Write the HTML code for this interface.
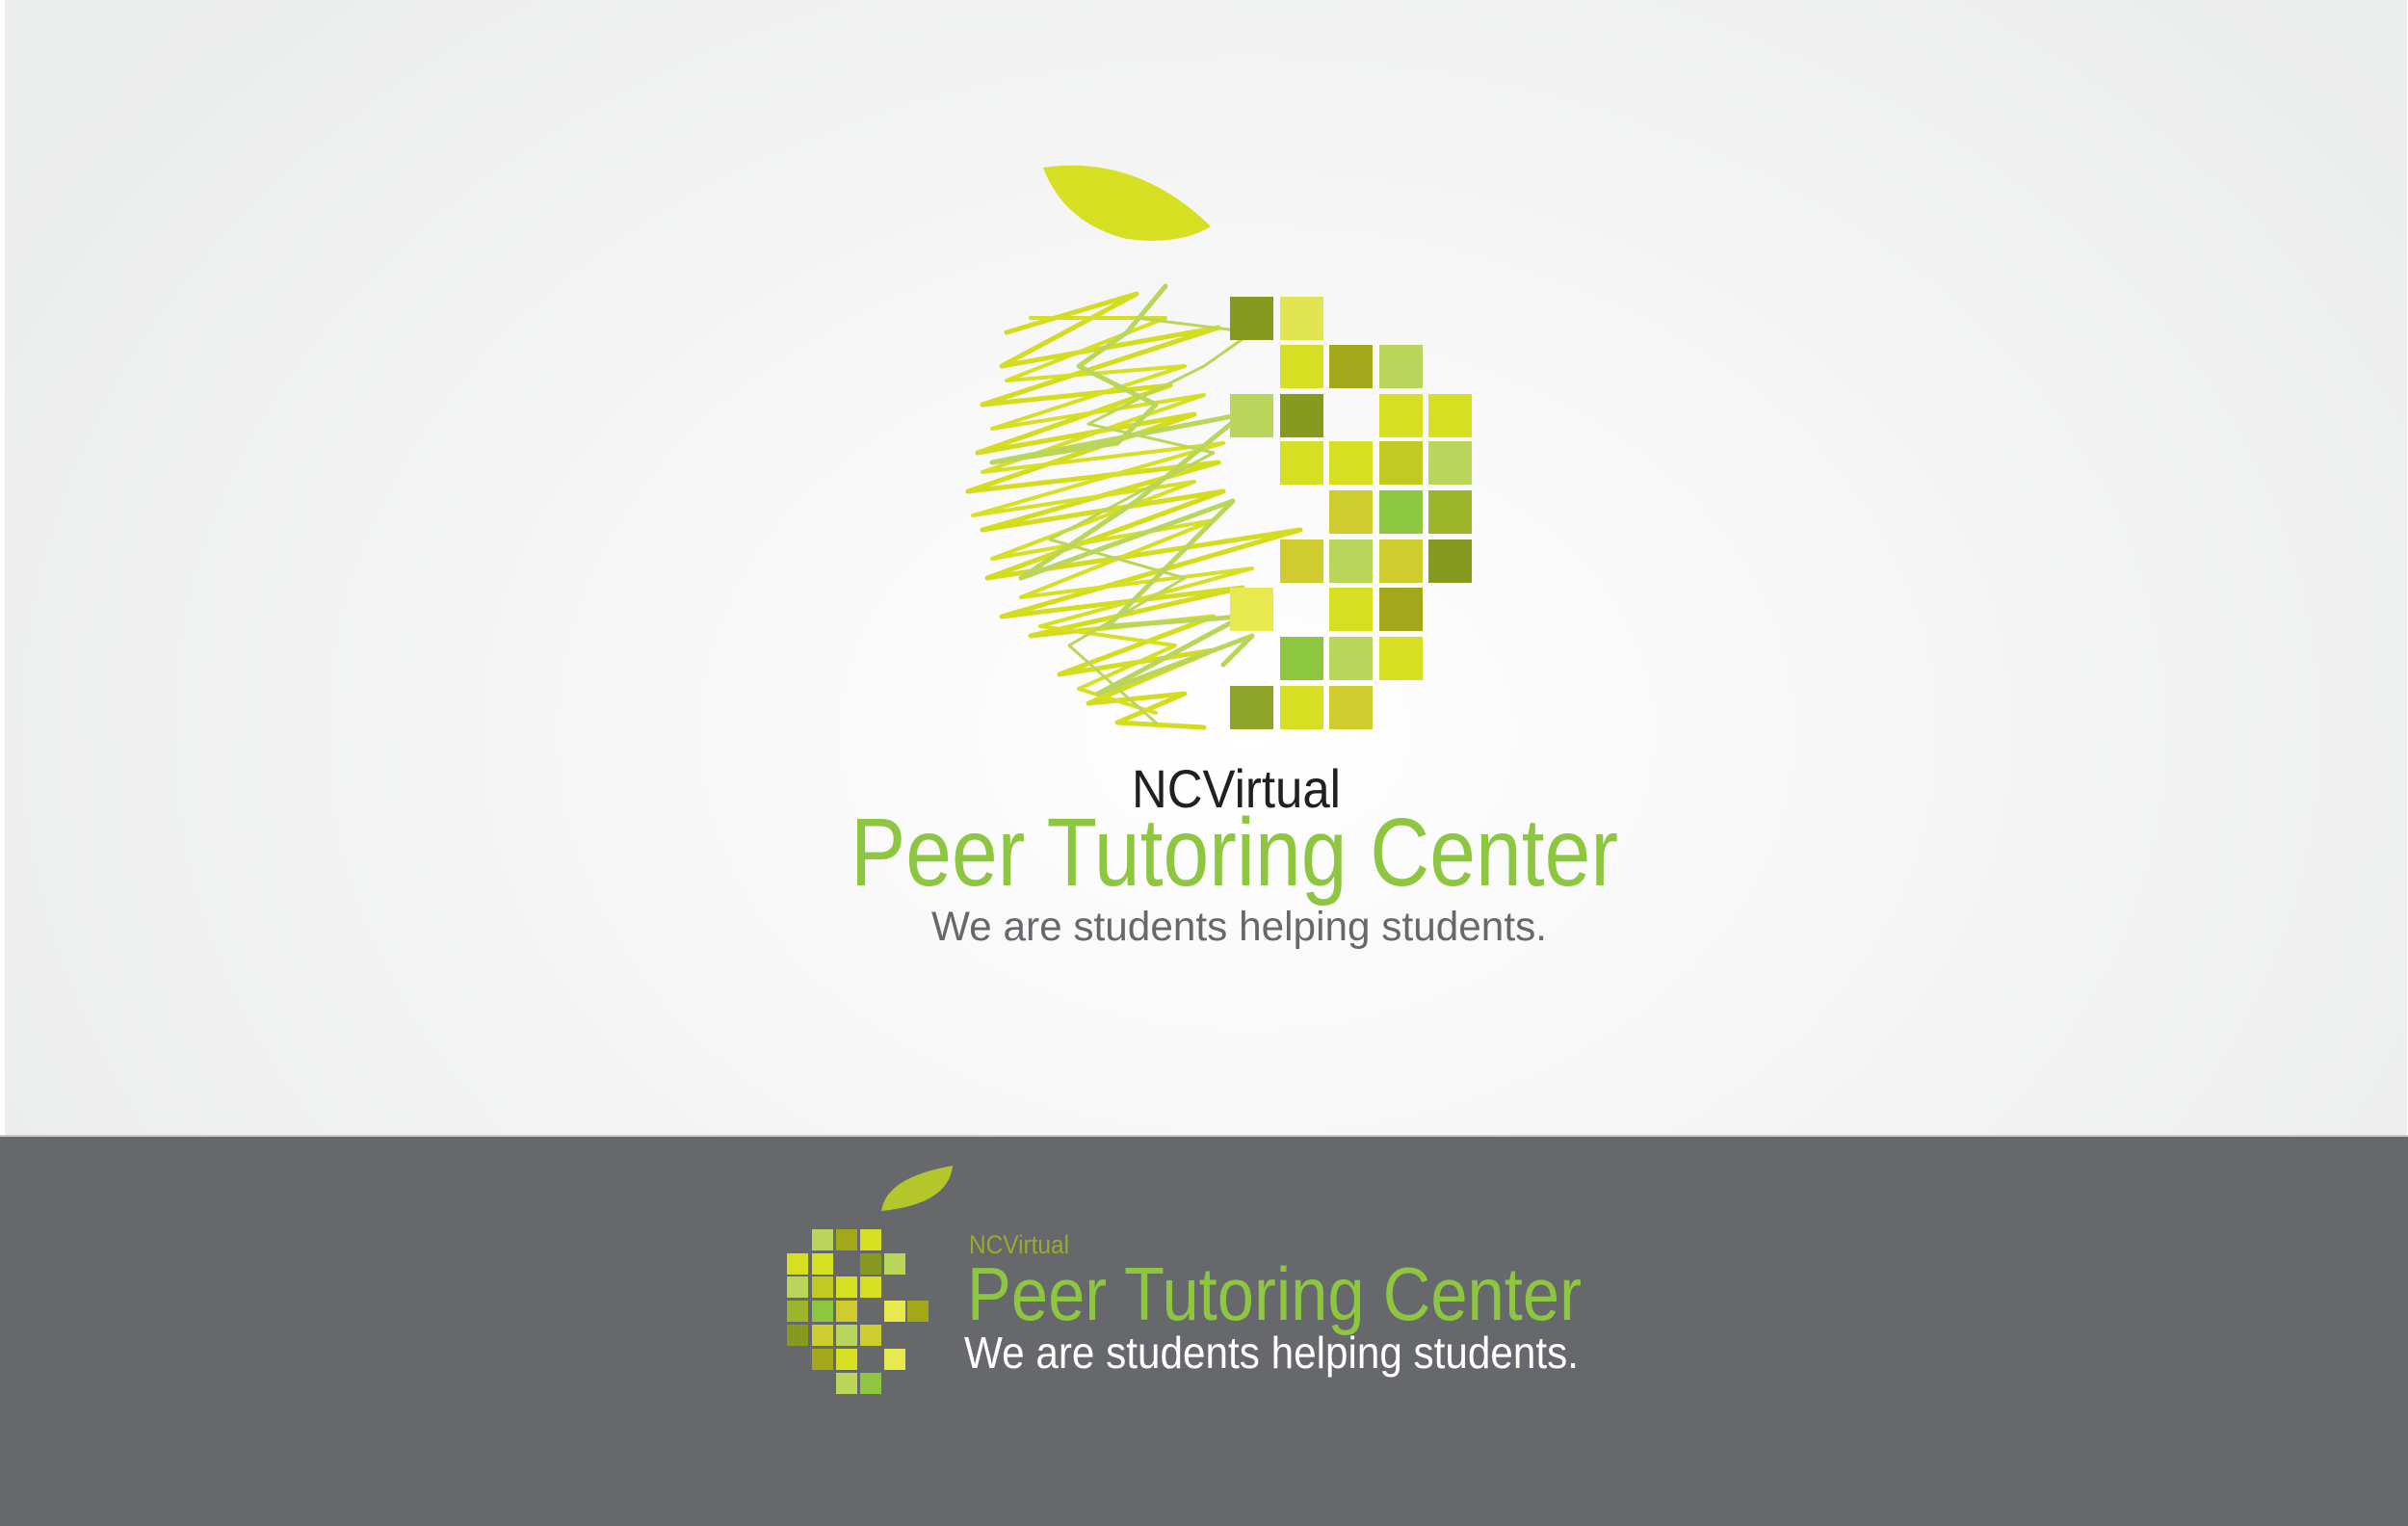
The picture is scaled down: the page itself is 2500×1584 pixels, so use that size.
<!DOCTYPE html>
<html><head><meta charset="utf-8"><style>
html,body{margin:0;padding:0;}
body{width:2500px;height:1584px;overflow:hidden;background:#fff;position:relative;}
.top{position:absolute;left:5px;top:0;width:2494px;height:1178px;background:radial-gradient(ellipse 1500px 1100px at 1290px 760px,#ffffff 0%,#f6f6f6 45%,#ebecec 100%);}
.band{position:absolute;left:0;top:1178px;width:2500px;height:406px;background:#67686c;border-top:2px solid #c9c9c9;box-sizing:border-box;}
svg{position:absolute;left:0;top:0;}
</style></head><body>
<div class="top"></div>
<div class="band"></div>
<svg width="2500" height="1584" viewBox="0 0 2500 1584" xmlns="http://www.w3.org/2000/svg">
<path d="M1083,174 Q1180,160 1257,235 Q1225,255 1170,248 Q1105,232 1083,174 Z" fill="#d6df22"/>
<g fill="none" stroke-linejoin="round" stroke-linecap="round">
<polyline stroke="#d4dc1e" stroke-width="5" points="1045,345 1180,305 1040,380 1265,340 1020,420 1215,400 1015,470 1240,430 1005,510 1265,480 1020,550 1270,510 1025,600 1350,550 1040,640 1290,610 1070,660 1260,640 1100,700 1260,675 1130,730 1230,720 1160,750 1250,755"/>
<polyline stroke="#d6df22" stroke-width="4" points="1070,330 1210,330 1045,395 1230,380 1030,445 1250,410 1020,490 1270,460 1010,535 1240,500 1030,580 1260,540 1060,620 1300,590 1080,650 1220,670 1120,715 1200,740"/>
<polyline stroke="#b9d65a" stroke-width="5" points="1210,297 1170,345 1120,380 1200,420 1160,460 1030,480 1290,430 1180,520 1060,600 1280,520 1150,650 1290,640 1140,720 1300,660 1270,690"/>
<polyline stroke="#b9d65a" stroke-width="3" points="1180,330 1300,345 1250,380 1130,440 1260,470 1090,560 1230,600 1110,670 1200,750"/>
</g>
<g>
<rect x="1277" y="308" width="45" height="45" fill="#879a20"/>
<rect x="1329" y="308" width="45" height="45" fill="#e2e552"/>
<rect x="1329" y="358" width="45" height="45" fill="#d6df22"/>
<rect x="1380" y="358" width="45" height="45" fill="#a2a819"/>
<rect x="1432" y="358" width="45" height="45" fill="#b9d65a"/>
<rect x="1277" y="409" width="45" height="45" fill="#b9d65a"/>
<rect x="1329" y="409" width="45" height="45" fill="#879a20"/>
<rect x="1432" y="409" width="45" height="45" fill="#d6df22"/>
<rect x="1483" y="409" width="45" height="45" fill="#d6df22"/>
<rect x="1329" y="458" width="45" height="45" fill="#d6df22"/>
<rect x="1380" y="458" width="45" height="45" fill="#d6df22"/>
<rect x="1432" y="458" width="45" height="45" fill="#c2c920"/>
<rect x="1483" y="458" width="45" height="45" fill="#b9d65a"/>
<rect x="1380" y="509" width="45" height="45" fill="#cfcc30"/>
<rect x="1432" y="509" width="45" height="45" fill="#8dc63f"/>
<rect x="1483" y="509" width="45" height="45" fill="#9db52a"/>
<rect x="1329" y="560" width="45" height="45" fill="#cfcc30"/>
<rect x="1380" y="560" width="45" height="45" fill="#b9d65a"/>
<rect x="1432" y="560" width="45" height="45" fill="#cfcc30"/>
<rect x="1483" y="560" width="45" height="45" fill="#879a20"/>
<rect x="1277" y="610" width="45" height="45" fill="#e8e84f"/>
<rect x="1380" y="610" width="45" height="45" fill="#d6df22"/>
<rect x="1432" y="610" width="45" height="45" fill="#a2a819"/>
<rect x="1329" y="661" width="45" height="45" fill="#8dc63f"/>
<rect x="1380" y="661" width="45" height="45" fill="#b9d65a"/>
<rect x="1432" y="661" width="45" height="45" fill="#d6df22"/>
<rect x="1277" y="712" width="45" height="45" fill="#8ea428"/>
<rect x="1329" y="712" width="45" height="45" fill="#d6df22"/>
<rect x="1380" y="712" width="45" height="45" fill="#cfcc30"/>
</g>
<g font-family="Liberation Sans, sans-serif">
<text x="1175" y="838" font-size="56" fill="#231f20" textLength="217" lengthAdjust="spacingAndGlyphs">NCVirtual</text>
<text x="883" y="919" font-size="100" fill="#8dc63f" textLength="797" lengthAdjust="spacingAndGlyphs">Peer Tutoring Center</text>
<text x="967" y="976" font-size="43" fill="#68686c" textLength="639" lengthAdjust="spacingAndGlyphs">We are students helping students.</text>
</g>
<path d="M989,1210 Q985,1250 915,1257 Q920,1222 989,1210 Z" fill="#b3c62a"/>
<g>
<rect x="843" y="1276" width="22" height="22" fill="#b9d65a"/>
<rect x="868" y="1276" width="22" height="22" fill="#a2a819"/>
<rect x="893" y="1276" width="22" height="22" fill="#d6df22"/>
<rect x="817" y="1301" width="22" height="22" fill="#d6df22"/>
<rect x="843" y="1301" width="22" height="22" fill="#d6df22"/>
<rect x="893" y="1301" width="22" height="22" fill="#879a20"/>
<rect x="918" y="1301" width="22" height="22" fill="#b9d65a"/>
<rect x="817" y="1325" width="22" height="22" fill="#b9d65a"/>
<rect x="843" y="1325" width="22" height="22" fill="#c2c920"/>
<rect x="868" y="1325" width="22" height="22" fill="#d6df22"/>
<rect x="893" y="1325" width="22" height="22" fill="#d6df22"/>
<rect x="817" y="1350" width="22" height="22" fill="#9db52a"/>
<rect x="843" y="1350" width="22" height="22" fill="#8dc63f"/>
<rect x="868" y="1350" width="22" height="22" fill="#cfcc30"/>
<rect x="918" y="1350" width="22" height="22" fill="#e8e84f"/>
<rect x="942" y="1350" width="22" height="22" fill="#a2a819"/>
<rect x="817" y="1375" width="22" height="22" fill="#879a20"/>
<rect x="843" y="1375" width="22" height="22" fill="#cfcc30"/>
<rect x="868" y="1375" width="22" height="22" fill="#b9d65a"/>
<rect x="893" y="1375" width="22" height="22" fill="#cfcc30"/>
<rect x="843" y="1400" width="22" height="22" fill="#a2a819"/>
<rect x="868" y="1400" width="22" height="22" fill="#d6df22"/>
<rect x="918" y="1400" width="22" height="22" fill="#e8e84f"/>
<rect x="868" y="1425" width="22" height="22" fill="#b9d65a"/>
<rect x="893" y="1425" width="22" height="22" fill="#8dc63f"/>
</g>
<g font-family="Liberation Sans, sans-serif">
<text x="1006" y="1301" font-size="27" fill="#97ad2a" textLength="104" lengthAdjust="spacingAndGlyphs">NCVirtual</text>
<text x="1004" y="1370" font-size="78" fill="#8dc63f" textLength="638" lengthAdjust="spacingAndGlyphs">Peer Tutoring Center</text>
<text x="1001" y="1420" font-size="46" fill="#ffffff" textLength="638" lengthAdjust="spacingAndGlyphs">We are students helping students.</text>
</g>
</svg>
</body></html>
